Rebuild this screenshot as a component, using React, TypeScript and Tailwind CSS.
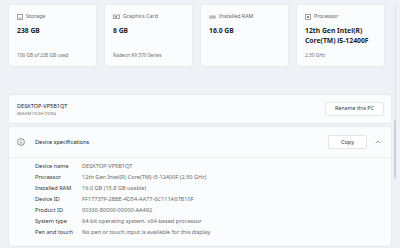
import React from "react";

const font = { fontFamily: '"Noto Sans", "Open Sans", sans-serif' };

function StorageIcon() {
  return (
    <svg width="6" height="6" viewBox="0 0 6 6" className="shrink-0">
      <rect x="0.5" y="0.5" width="5" height="5" fill="none" stroke="#8a8a8a" strokeWidth="0.8" />
      <line x1="1.5" y1="4" x2="4.5" y2="4" stroke="#8a8a8a" strokeWidth="0.7" />
    </svg>
  );
}

function GpuIcon() {
  return (
    <svg width="7" height="6" viewBox="0 0 7 6" className="shrink-0">
      <rect x="0.5" y="1" width="6" height="3.5" fill="none" stroke="#8a8a8a" strokeWidth="0.8" />
      <rect x="2" y="2" width="2" height="1.5" fill="#8a8a8a" />
    </svg>
  );
}

function RamIcon() {
  return (
    <svg width="7" height="6" viewBox="0 0 7 6" className="shrink-0">
      <rect x="0.5" y="1.5" width="6" height="3" fill="#9a9a9a" />
      <line x1="2" y1="1.5" x2="2" y2="4.5" stroke="#fff" strokeWidth="0.5" />
      <line x1="3.5" y1="1.5" x2="3.5" y2="4.5" stroke="#fff" strokeWidth="0.5" />
      <line x1="5" y1="1.5" x2="5" y2="4.5" stroke="#fff" strokeWidth="0.5" />
    </svg>
  );
}

function CpuIcon() {
  return (
    <svg width="6" height="6" viewBox="0 0 6 6" className="shrink-0">
      <rect x="0.5" y="0.5" width="5" height="5" fill="none" stroke="#8a8a8a" strokeWidth="0.8" />
      <rect x="2" y="2" width="2" height="2" fill="#8a8a8a" />
    </svg>
  );
}

function Card({
  icon,
  label,
  value,
  sub,
}: {
  icon: React.ReactNode;
  label: string;
  value: string[];
  sub: string;
}) {
  return (
    <div className="w-[89px] h-[63px] bg-[#fbfcfd] border border-[#e6e9ee] rounded-[3px] pl-[8px] pr-[4px] pt-[8px] flex flex-col">
      <div className="flex items-center gap-[3px] h-[8px]">
        {icon}
        <span className="text-[5.3px] text-[#666]">{label}</span>
      </div>
      <div className="mt-[5px] text-[6.8px] font-bold text-[#1f1f1f] leading-[10px]">
        {value.map((v) => (
          <div key={v}>{v}</div>
        ))}
      </div>
      <div className="mt-auto mb-[7px] text-[4.8px] text-[#6f6f6f]">{sub}</div>
    </div>
  );
}

const specs: [string, string][] = [
  ["Device name", "DESKTOP-VP5B1QT"],
  ["Processor", "12th Gen Intel(R) Core(TM) i5-12400F (2.50 GHz)"],
  ["Installed RAM", "16.0 GB (15.8 GB usable)"],
  ["Device ID", "FF17737F-2B8E-4D54-AA77-6C111A67B10F"],
  ["Product ID", "00330-80000-00000-AA492"],
  ["System type", "64-bit operating system, x64-based processor"],
  ["Pen and touch", "No pen or touch input is available for this display"],
];

export default function App() {
  return (
    <div className="w-[400px] h-[248px] bg-[#eef2f7] overflow-hidden relative pl-[8px] pt-[4px]" style={font}>
      <div className="flex gap-[7px]">
        <Card icon={<StorageIcon />} label="Storage" value={["238 GB"]} sub="106 GB of 238 GB used" />
        <Card icon={<GpuIcon />} label="Graphics Card" value={["8 GB"]} sub="Radeon RX 570 Series" />
        <Card icon={<RamIcon />} label="Installed RAM" value={["16.0 GB"]} sub="" />
        <Card
          icon={<CpuIcon />}
          label="Processor"
          value={["12th Gen Intel(R)", "Core(TM) i5-12400F"]}
          sub="2.50 GHz"
        />
      </div>

      <div className="mt-[27px] w-[384px] h-[30px] bg-[#fbfcfd] border border-[#e6e9ee] rounded-t-[3px] flex items-center pl-[8px] pr-[7px]">
        <div className="flex flex-col">
          <span className="text-[5.6px] text-[#222] leading-[8px]">DESKTOP-VP5B1QT</span>
          <span className="text-[4.3px] text-[#777] leading-[6px]">B660M DS3H DDR4</span>
        </div>
        <div className="ml-auto h-[14px] w-[59px] bg-white border border-[#e3e5e9] rounded-[2px] flex items-center justify-center text-[5.3px] text-[#333]">
          Rename this PC
        </div>
      </div>

      <div className="mt-[2px] w-[384px] bg-[#fbfcfd] border border-[#e6e9ee] rounded-[3px]">
        <div className="h-[31px] flex items-center pl-[8px] pr-[8px] border-b border-[#eceef1]">
          <svg width="8" height="8" viewBox="0 0 8 8" className="ml-[0px]">
            <circle cx="4" cy="4" r="3.4" fill="none" stroke="#444" strokeWidth="0.6" />
            <line x1="4" y1="3.4" x2="4" y2="5.8" stroke="#444" strokeWidth="0.7" />
            <circle cx="4" cy="2.4" r="0.45" fill="#444" />
          </svg>
          <span className="ml-[10px] text-[5.6px] text-[#222]">Device specifications</span>
          <div className="ml-auto h-[14px] w-[39px] bg-white border border-[#e3e5e9] rounded-[2px] flex items-center justify-center text-[5.6px] text-[#333]">
            Copy
          </div>
          <svg width="6" height="4" viewBox="0 0 6 4" className="ml-[8px] mr-[2px]">
            <polyline points="0.8,3.2 3,1 5.2,3.2" fill="none" stroke="#555" strokeWidth="0.6" />
          </svg>
        </div>
        <div className="pt-[3px] pb-[8px] pl-[26px]">
          {specs.map(([k, v]) => (
            <div key={k} className="flex h-[11px] items-center text-[5.6px]">
              <span className="w-[47px] text-[#333]">{k}</span>
              <span className="text-[#6a6a6a] whitespace-nowrap">{v}</span>
            </div>
          ))}
        </div>
      </div>

      <div className="absolute left-[395px] top-[5px] w-[1px] h-[175px] bg-[#dfe3e8]" />
      <div className="absolute left-[394px] top-[120px] w-[2px] h-[58px] rounded-full bg-[#c9ced5]" />
    </div>
  );
}
